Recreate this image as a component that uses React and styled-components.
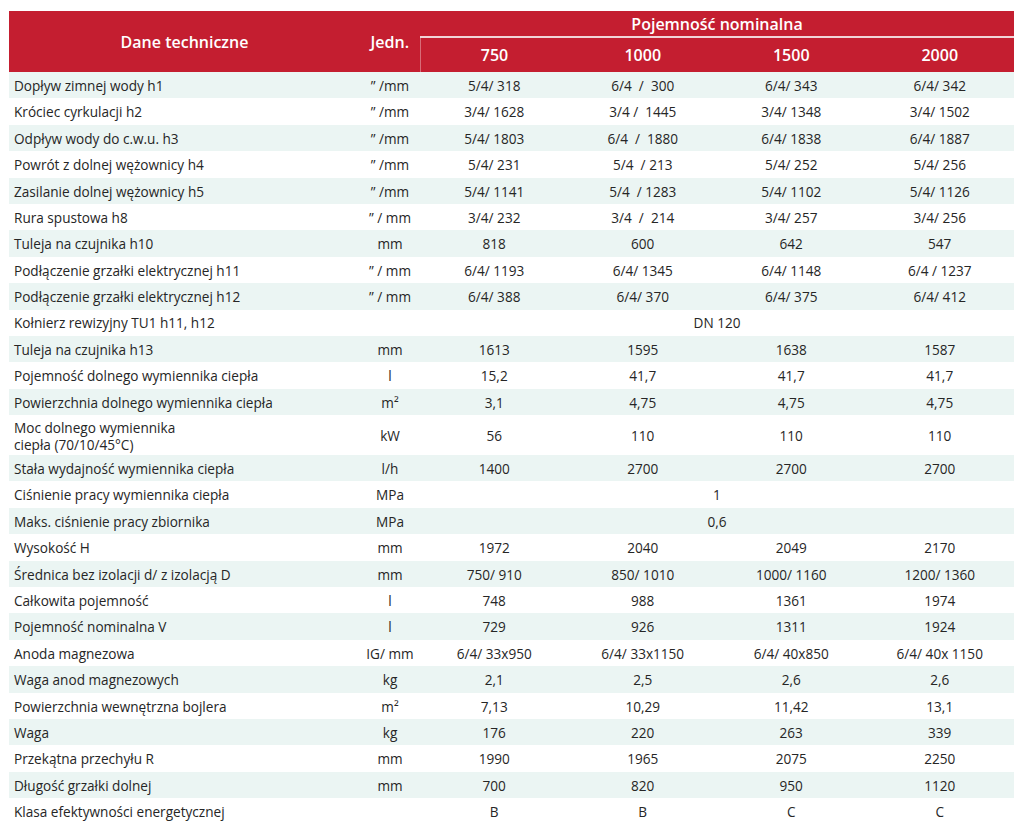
import React from 'react'
import styled, { createGlobalStyle } from 'styled-components'

const GlobalStyle = createGlobalStyle`
    html, body {
        margin: 0;
        padding: 0;
        background: #ffffff;
    }
    body {
        font-family: "Open Sans", "Liberation Sans", sans-serif;
        color: #262626;
    }
`

const Page = styled.div`
    width: 1024px;
    height: 830px;
    padding: 11px 10px 0 9px;
    box-sizing: border-box;
    overflow: hidden;
`

const Table = styled.table`
    width: 1005px;
    border-collapse: collapse;
    table-layout: fixed;
    font-size: 13.6px;
`

const HeadCell = styled.th`
    background: #c41e30;
    color: #ffffff;
    font-weight: 600;
    font-size: 16px;
    text-align: center;
    padding: 0;
    height: ${p => p.$h || 25}px;
    border-bottom: ${p => (p.$line ? '2px solid #f1d4d7' : 'none')};
    border-left: ${p => (p.$divider ? '1px solid rgba(255,255,255,0.35)' : 'none')};
`

const Row = styled.tr`
    background: ${p => (p.$striped ? '#ebf5f3' : '#ffffff')};
`

const Label = styled.td`
    box-sizing: border-box;
    height: ${p => (p.$tall ? 40 : 26.4)}px;
    padding: 2px 0 0 5px;
    line-height: ${p => (p.$tall ? 17 : 16.5)}px;
    text-align: left;
    white-space: nowrap;
`

const Cell = styled.td`
    box-sizing: border-box;
    padding: 2px 0 0;
    line-height: 16.5px;
    text-align: center;
    white-space: pre;
`

const rows = [
    ['Dopływ zimnej wody h1', '” /mm', ['5/4/ 318', '6/4  /  300', '6/4/ 343', '6/4/ 342']],
    ['Króciec cyrkulacji h2', '” /mm', ['3/4/ 1628', '3/4 /  1445', '3/4/ 1348', '3/4/ 1502']],
    ['Odpływ wody do c.w.u. h3', '” /mm', ['5/4/ 1803', '6/4  /  1880', '6/4/ 1838', '6/4/ 1887']],
    ['Powrót z dolnej wężownicy h4', '” /mm', ['5/4/ 231', '5/4  / 213', '5/4/ 252', '5/4/ 256']],
    ['Zasilanie dolnej wężownicy h5', '” /mm', ['5/4/ 1141', '5/4  / 1283', '5/4/ 1102', '5/4/ 1126']],
    ['Rura spustowa h8', '” / mm', ['3/4/ 232', '3/4  /  214', '3/4/ 257', '3/4/ 256']],
    ['Tuleja na czujnika h10', 'mm', ['818', '600', '642', '547']],
    ['Podłączenie grzałki elektrycznej h11', '” / mm', ['6/4/ 1193', '6/4/ 1345', '6/4/ 1148', '6/4 / 1237']],
    ['Podłączenie grzałki elektrycznej h12', '” / mm', ['6/4/ 388', '6/4/ 370', '6/4/ 375', '6/4/ 412']],
    ['Kołnierz rewizyjny TU1 h11, h12', '', 'DN 120'],
    ['Tuleja na czujnika h13', 'mm', ['1613', '1595', '1638', '1587']],
    ['Pojemność dolnego wymiennika ciepła', 'l', ['15,2', '41,7', '41,7', '41,7']],
    ['Powierzchnia dolnego wymiennika ciepła', 'm²', ['3,1', '4,75', '4,75', '4,75']],
    [['Moc dolnego wymiennika', 'ciepła (70/10/45°C)'], 'kW', ['56', '110', '110', '110']],
    ['Stała wydajność wymiennika ciepła', 'l/h', ['1400', '2700', '2700', '2700']],
    ['Ciśnienie pracy wymiennika ciepła', 'MPa', '1'],
    ['Maks. ciśnienie pracy zbiornika', 'MPa', '0,6'],
    ['Wysokość H', 'mm', ['1972', '2040', '2049', '2170']],
    ['Średnica bez izolacji d/ z izolacją D', 'mm', ['750/ 910', '850/ 1010', '1000/ 1160', '1200/ 1360']],
    ['Całkowita pojemność', 'l', ['748', '988', '1361', '1974']],
    ['Pojemność nominalna V', 'l', ['729', '926', '1311', '1924']],
    ['Anoda magnezowa', 'IG/ mm', ['6/4/ 33x950', '6/4/ 33x1150', '6/4/ 40x850', '6/4/ 40x 1150']],
    ['Waga anod magnezowych', 'kg', ['2,1', '2,5', '2,6', '2,6']],
    ['Powierzchnia wewnętrzna bojlera', 'm²', ['7,13', '10,29', '11,42', '13,1']],
    ['Waga', 'kg', ['176', '220', '263', '339']],
    ['Przekątna przechyłu R', 'mm', ['1990', '1965', '2075', '2250']],
    ['Długość grzałki dolnej', 'mm', ['700', '820', '950', '1120']],
    ['Klasa efektywności energetycznej', '', ['B', 'B', 'C', 'C']],
]

const capacities = ['750', '1000', '1500', '2000']

const App = () => {
    return (
        <Page>
            <GlobalStyle />
            <Table>
                <colgroup>
                    <col style={{ width: 351 }} />
                    <col style={{ width: 60 }} />
                    <col />
                    <col />
                    <col />
                    <col />
                </colgroup>
                <thead>
                    <tr>
                        <HeadCell rowSpan={2}>Dane techniczne</HeadCell>
                        <HeadCell rowSpan={2}>Jedn.</HeadCell>
                        <HeadCell colSpan={4} $line>Pojemność nominalna</HeadCell>
                    </tr>
                    <tr>
                        {capacities.map((c, i) => (
                            <HeadCell key={c} $h={34} $divider={i === 0}>{c}</HeadCell>
                        ))}
                    </tr>
                </thead>
                <tbody>
                    {rows.map(([label, unit, values], index) => {
                        const tall = Array.isArray(label)
                        return (
                            <Row key={index} $striped={index % 2 === 0}>
                                <Label $tall={tall}>
                                    {tall ? <>{label[0]}<br />{label[1]}</> : label}
                                </Label>
                                <Cell>{unit}</Cell>
                                {Array.isArray(values)
                                    ? values.map((v, i) => <Cell key={i}>{v}</Cell>)
                                    : <Cell colSpan={4}>{values}</Cell>}
                            </Row>
                        )
                    })}
                </tbody>
            </Table>
        </Page>
    )
}

export default App
